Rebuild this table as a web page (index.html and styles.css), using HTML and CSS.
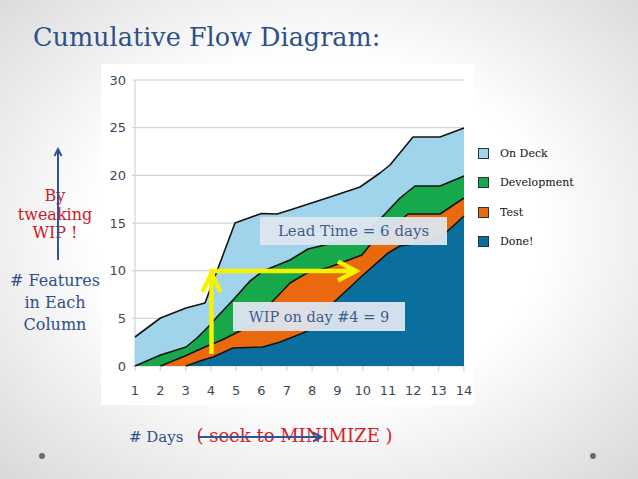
FILE: index.html
```html
<!DOCTYPE html>
<html>
<head>
<meta charset="utf-8">
<link rel="stylesheet" href="styles.css">
</head>
<body>
<div class="slide">
  <h1 class="title">Cumulative Flow Diagram:</h1>
  <div class="main">
    <div class="side">
      <div class="side-red">By<br>tweaking<br>WIP !</div>
      <div class="side-blue"># Features<br>in Each<br>Column</div>
      <svg class="up-arrow" width="12" height="114" viewBox="0 0 12 114">
        <line x1="6" y1="2" x2="6" y2="113" stroke="#2f5597" stroke-width="2"/>
        <polyline points="2.5,9 6,2 9.5,9" fill="none" stroke="#2f5597" stroke-width="2"/>
      </svg>
    </div>
    <div class="chart">
      <svg class="cfd" viewBox="101 64 373 341" width="373" height="341">
        <g stroke="#c9d5df" stroke-width="1.2">
          <line x1="132" y1="80" x2="464" y2="80"/>
          <line x1="132" y1="127.7" x2="464" y2="127.7"/>
          <line x1="132" y1="175.4" x2="464" y2="175.4"/>
          <line x1="132" y1="223.1" x2="464" y2="223.1"/>
          <line x1="132" y1="270.7" x2="464" y2="270.7"/>
          <line x1="132" y1="318.4" x2="464" y2="318.4"/>
          <line x1="132" y1="366" x2="464" y2="366"/>
          <line x1="135" y1="80" x2="135" y2="366"/>
          <line x1="135" y1="366" x2="135" y2="371"/>
          <line x1="160.3" y1="366" x2="160.3" y2="371"/>
          <line x1="185.6" y1="366" x2="185.6" y2="371"/>
          <line x1="210.9" y1="366" x2="210.9" y2="371"/>
          <line x1="236.2" y1="366" x2="236.2" y2="371"/>
          <line x1="261.5" y1="366" x2="261.5" y2="371"/>
          <line x1="286.8" y1="366" x2="286.8" y2="371"/>
          <line x1="312.1" y1="366" x2="312.1" y2="371"/>
          <line x1="337.4" y1="366" x2="337.4" y2="371"/>
          <line x1="362.7" y1="366" x2="362.7" y2="371"/>
          <line x1="388" y1="366" x2="388" y2="371"/>
          <line x1="413.3" y1="366" x2="413.3" y2="371"/>
          <line x1="438.6" y1="366" x2="438.6" y2="371"/>
          <line x1="463.9" y1="366" x2="463.9" y2="371"/>
        </g>
        <polygon class="a-deck" points="135,337 160.5,318 186,308 205,303 235,223 261.5,213.5 277,214 290,210 330,197 360,187 380,173 390,165 413,137 440,137 464,128 464,366 135,366"/>
        <polygon class="a-dev" points="135,366 160.5,355 186,347 197,338 208,327 217,317 233,300 250,281 263,271 290,260 308,249 345,240 370,229 385,214 400,198 415,186 440,186 464,176 464,366"/>
        <polygon class="a-test" points="160.5,366 185,356 205,347 222,340 240,331 260,322 272,302 290,283 307,273 330,267 362,255 370,245 408,214 440,214 464,198 464,366"/>
        <polygon class="a-done" points="186,366 200,361 213,357 233,348 263,347 280,342 303,333 318,326 333,303 347,290 362,276 388,253 400,246 427,242 440,238 464,216 464,366"/>
        <g fill="none" stroke="#141414" stroke-width="1.6" stroke-linejoin="round">
          <polyline points="135,337 160.5,318 186,308 205,303 235,223 261.5,213.5 277,214 290,210 330,197 360,187 380,173 390,165 413,137 440,137 464,128"/>
          <polyline points="135,366 160.5,355 186,347 197,338 208,327 217,317 233,300 250,281 263,271 290,260 308,249 345,240 370,229 385,214 400,198 415,186 440,186 464,176"/>
          <polyline points="160.5,366 185,356 205,347 222,340 240,331 260,322 272,302 290,283 307,273 330,267 362,255 370,245 408,214 440,214 464,198"/>
          <polyline points="186,366 200,361 213,357 233,348 263,347 280,342 303,333 318,326 333,303 347,290 362,276 388,253 400,246 427,242 440,238 464,216"/>
        </g>
        <g class="ylab">
          <text x="126" y="84.5">30</text>
          <text x="126" y="132.2">25</text>
          <text x="126" y="179.9">20</text>
          <text x="126" y="227.6">15</text>
          <text x="126" y="275.2">10</text>
          <text x="126" y="322.9">5</text>
          <text x="126" y="370.5">0</text>
        </g>
        <g class="xlab">
          <text x="135" y="395">1</text>
          <text x="160.3" y="395">2</text>
          <text x="185.6" y="395">3</text>
          <text x="210.9" y="395">4</text>
          <text x="236.2" y="395">5</text>
          <text x="261.5" y="395">6</text>
          <text x="286.8" y="395">7</text>
          <text x="312.1" y="395">8</text>
          <text x="337.4" y="395">9</text>
          <text x="362.7" y="395">10</text>
          <text x="388" y="395">11</text>
          <text x="413.3" y="395">12</text>
          <text x="438.6" y="395">13</text>
          <text x="463.9" y="395">14</text>
        </g>
        <g fill="none" stroke="#f4f400" stroke-width="4.5">
          <line x1="211.5" y1="354" x2="211.5" y2="272"/>
          <polyline points="202.5,292 211.5,273 220.5,292"/>
          <line x1="209.5" y1="271" x2="355" y2="271"/>
          <polyline points="338,261.5 356,271 338,280.5"/>
        </g>
      </svg>
      <div class="callout callout-lead">Lead Time = 6 days</div>
      <div class="callout callout-wip">WIP on day #4 = 9</div>
    </div>
    <ul class="legend">
      <li class="legend-item"><span class="swatch sw-deck"></span>On Deck</li>
      <li class="legend-item"><span class="swatch sw-dev"></span>Development</li>
      <li class="legend-item"><span class="swatch sw-test"></span>Test</li>
      <li class="legend-item"><span class="swatch sw-done"></span>Done!</li>
    </ul>
  </div>
  <div class="xcap">
    <span class="days"># Days</span>
    <span class="minimize">( seek to MINIMIZE )<svg class="strike" width="126" height="12" viewBox="0 0 126 12">
        <line x1="0" y1="6" x2="123" y2="6" stroke="#2f5597" stroke-width="2"/>
        <polyline points="115,1.5 123.5,6 115,10.5" fill="none" stroke="#2f5597" stroke-width="2"/>
      </svg></span>
  </div>
  <div class="footer"><span class="dot"></span><span class="dot"></span></div>
</div>
</body>
</html>
```

FILE: styles.css
```css
html, body {
  margin: 0;
  padding: 0;
}
body {
  width: 638px;
  height: 479px;
  overflow: hidden;
  font-family: "DejaVu Serif", "Liberation Serif", serif;
  background: radial-gradient(ellipse 70% 72% at 50% 48%, #ffffff 50%, #dadada 100%);
}
.slide {
  width: 638px;
  height: 479px;
}
.title {
  margin: 0;
  padding: 20px 0 0 33px;
  font-size: 25.5px;
  line-height: 34px;
  font-weight: normal;
  color: #2e5089;
}
.main {
  display: flex;
  margin-top: 10px;
  height: 341px;
}
.side {
  position: relative;
  box-sizing: border-box;
  width: 101px;
  padding: 123px 0 0 9px;
  text-align: center;
  font-size: 16px;
  flex: none;
}
.side-red {
  color: #cc2027;
  line-height: 18.5px;
}
.side-blue {
  margin-top: 27px;
  color: #2f4f8a;
  line-height: 22px;
}
.up-arrow {
  position: absolute;
  left: 52px;
  top: 83px;
}
.chart {
  position: relative;
  width: 373px;
  height: 341px;
  background: #ffffff;
  flex: none;
}
.cfd {
  display: block;
}
.a-deck { fill: #a0d4ea; }
.a-dev { fill: #17a84b; }
.a-test { fill: #ea690f; }
.a-done { fill: #0b6f9e; }
.ylab text {
  font-family: "DejaVu Sans", sans-serif;
  font-size: 13px;
  fill: #3c4856;
  text-anchor: end;
}
.xlab text {
  font-family: "DejaVu Sans", sans-serif;
  font-size: 13px;
  fill: #3c4856;
  text-anchor: middle;
}
.callout {
  position: absolute;
  box-sizing: border-box;
  background: rgba(222, 230, 239, 0.95);
  color: #3d5d8f;
  display: flex;
  align-items: center;
  justify-content: center;
  white-space: nowrap;
}
.callout-lead {
  left: 159px;
  top: 153px;
  width: 187px;
  height: 28px;
  font-size: 15px;
}
.callout-wip {
  left: 132px;
  top: 238px;
  width: 172px;
  height: 29px;
  font-size: 14.5px;
}
.legend {
  list-style: none;
  margin: 0;
  padding: 75px 0 0 4px;
  font-size: 11px;
  color: #111;
}
.legend-item {
  display: flex;
  align-items: center;
  gap: 11px;
  height: 29.3px;
}
.swatch {
  box-sizing: border-box;
  width: 11px;
  height: 11px;
  border: 1.5px solid #26343c;
  flex: none;
}
.sw-deck { background: #a0d4ea; }
.sw-dev { background: #17a84b; }
.sw-test { background: #ea690f; }
.sw-done { background: #0b6f9e; }
.xcap {
  display: flex;
  align-items: baseline;
  padding-left: 129px;
  margin-top: 18px;
  height: 26px;
  line-height: 26px;
}
.days {
  font-size: 15px;
  color: #2f4f8a;
  margin-right: 13px;
}
.minimize {
  position: relative;
  font-size: 18px;
  color: #d42028;
}
.strike {
  position: absolute;
  left: 2px;
  top: 8px;
}
.footer {
  display: flex;
  justify-content: space-between;
  padding: 0 42px 0 39px;
  margin-top: 4px;
}
.dot {
  width: 6px;
  height: 6px;
  border-radius: 50%;
  background: #6a6a6a;
}
```
